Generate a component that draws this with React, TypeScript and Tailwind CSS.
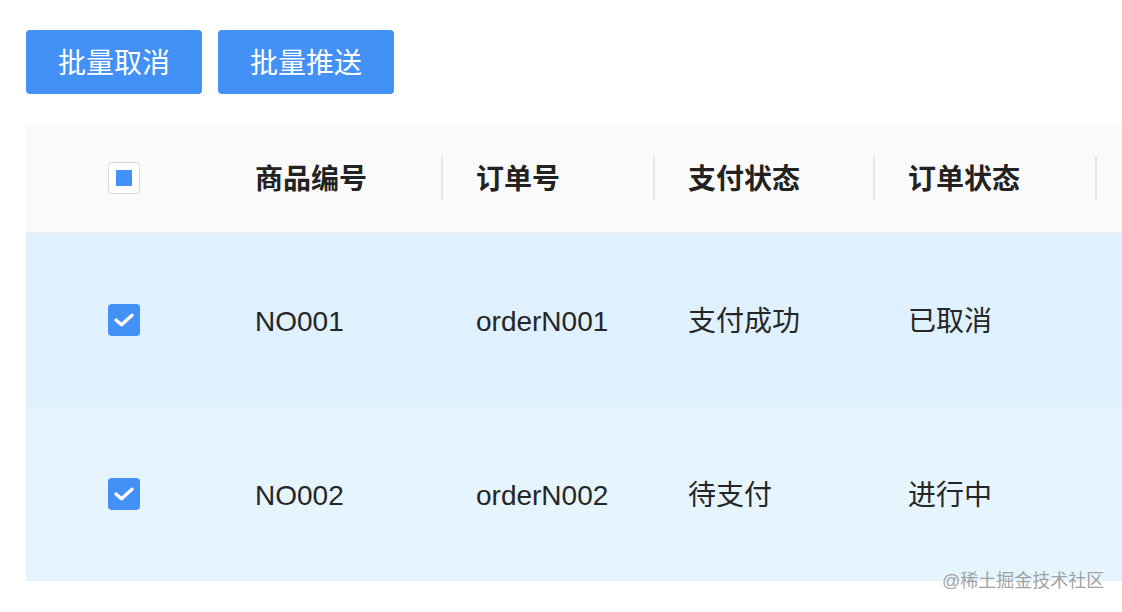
import React from 'react';

const rows = [
  { no: 'NO001', order: 'orderN001', pay: '支付成功', status: '已取消', bg: 'bg-[#dff0fe]' },
  { no: 'NO002', order: 'orderN002', pay: '待支付', status: '进行中', bg: 'bg-[#e6f5fd]' },
];

const font = { fontFamily: '"Liberation Sans", "Noto Sans CJK SC", sans-serif' };

const Checked = () => (
  <div className="w-8 h-8 rounded-[4px] bg-[#4391f7] flex items-center justify-center">
    <svg width="22" height="16" viewBox="0 0 22 16" fill="none">
      <path d="M3 8 L8.5 12.8 L19 3.2" stroke="white" strokeWidth="3.4" strokeLinecap="round" strokeLinejoin="round" />
    </svg>
  </div>
);

const App = () => {
  return (
    <div className="relative w-[1122px] h-[612px] bg-white overflow-hidden" style={font}>
      <div className="flex gap-4 pl-[26px] pt-[30px]">
        <button className="w-[176px] h-16 pt-[3px] rounded-[4px] bg-[#4391f7] text-white text-[28px] leading-none">批量取消</button>
        <button className="w-[176px] h-16 pt-[3px] rounded-[4px] bg-[#4391f7] text-white text-[28px] leading-none">批量推送</button>
      </div>

      <div className="ml-[26px] mt-[30px] w-[1120px]">
        {/* header */}
        <div className="flex h-[109px] items-center bg-[#fafafa] border-b border-[#f0f0f0] text-[28px] font-semibold text-[#222]">
          <div className="w-[196px] flex justify-center">
            <div className="w-8 h-8 rounded-[4px] bg-white border border-[#d9d9d9] flex items-center justify-center">
              <div className="w-4 h-4 bg-[#4391f7]" />
            </div>
          </div>
          {['商品编号', '订单号', '支付状态', '订单状态'].map((t, i) => (
            <div
              key={t}
              className={`${['w-[221px]', 'w-[212px]', 'w-[220px]', 'w-[222px]'][i]} relative pl-[33px] pt-[4px] leading-none`}
            >
              {t}
              <div className="absolute right-0 top-1/2 -translate-y-1/2 h-[44px] w-[2px] bg-[#e8e8e8]" />
            </div>
          ))}
          <div className="flex-1" />
        </div>

        {rows.map((r) => (
          <div key={r.no} className={`flex h-[174px] items-center border-b border-[#e3eef5] text-[28px] text-[#262626] ${r.bg}`}>
            <div className="w-[196px] flex justify-center">
              <Checked />
            </div>
            <div className="w-[221px] pl-[33px] pt-[4px] leading-none">{r.no}</div>
            <div className="w-[212px] pl-[33px] pt-[4px] leading-none">{r.order}</div>
            <div className="w-[220px] pl-[33px] pt-[4px] leading-none">{r.pay}</div>
            <div className="w-[222px] pl-[33px] pt-[4px] leading-none">{r.status}</div>
            <div className="flex-1" />
          </div>
        ))}
      </div>

      <div className="absolute left-[942px] top-[572px] text-[18px] text-[#9a9a9a] leading-none opacity-90">
        @稀土掘金技术社区
      </div>
    </div>
  );
};

export default App;
